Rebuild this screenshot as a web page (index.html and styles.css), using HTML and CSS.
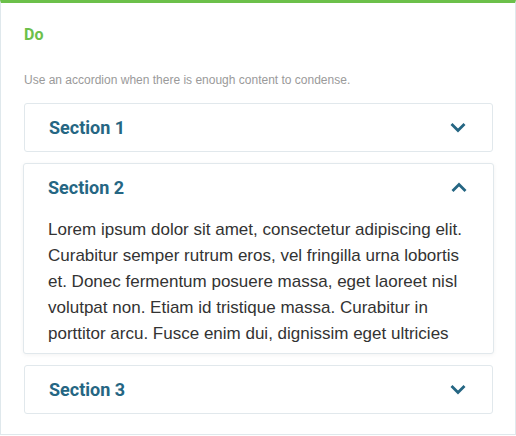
FILE: index.html
```html
<!DOCTYPE html>
<html lang="en">
<head>
    <meta charset="UTF-8">
    <title>Accordion - Do</title>
    <link rel="stylesheet" href="styles.css">
</head>
<body>
    <div class="card">
        <h4 class="card-title">Do</h4>
        <p class="card-note">Use an accordion when there is enough content to condense.</p>

        <div class="accordion">
            <div class="acc-item">
                <div class="acc-head">
                    <span>Section 1</span>
                    <svg class="chev" width="16" height="11" viewBox="0 0 16 11"><path d="M1.5 2 L8 8.5 L14.5 2" fill="none" stroke="currentColor" stroke-width="2.8"/></svg>
                </div>
            </div>

            <div class="acc-item open">
                <div class="acc-head">
                    <span>Section 2</span>
                    <svg class="chev" width="16" height="11" viewBox="0 0 16 11"><path d="M1.5 9 L8 2.5 L14.5 9" fill="none" stroke="currentColor" stroke-width="2.8"/></svg>
                </div>
                <div class="acc-body">
                    Lorem ipsum dolor sit amet, consectetur adipiscing elit. Curabitur semper rutrum eros, vel fringilla urna lobortis et. Donec fermentum posuere massa, eget laoreet nisl volutpat non. Etiam id tristique massa. Curabitur in porttitor arcu. Fusce enim dui, dignissim eget ultricies
                </div>
            </div>

            <div class="acc-item">
                <div class="acc-head">
                    <span>Section 3</span>
                    <svg class="chev" width="16" height="11" viewBox="0 0 16 11"><path d="M1.5 2 L8 8.5 L14.5 2" fill="none" stroke="currentColor" stroke-width="2.8"/></svg>
                </div>
            </div>
        </div>
    </div>
</body>
</html>
```

FILE: styles.css
```css
body {
    margin: 0;
    padding: 0;
    background: #fff;
    font-family: "Liberation Sans", Arial, sans-serif;
}
.card {
    width: 516px;
    height: 435px;
    border: 1px solid #dfe8ec;
    border-top: 3px solid #6cc04a;
    padding: 0 22px 0 23px;
    box-sizing: border-box;
}
.card-title {
    margin: 0;
    padding-top: 23px;
    font-family: "Roboto", sans-serif;
    font-weight: 700;
    font-size: 16px;
    line-height: 18px;
    color: #6cc04a;
}
.card-note {
    margin: 29px 0 0;
    font-size: 12px;
    line-height: 14px;
    color: #9a9a9a;
}
.accordion {
    margin-top: 16px;
    display: flex;
    flex-direction: column;
    gap: 11px;
}
.acc-item {
    border: 1px solid #e1e8ec;
    border-radius: 3px;
    background: #fff;
}
.acc-item.open {
    margin: 0 -1px;
    box-shadow: 0 1px 4px rgba(0, 0, 0, 0.05);
}
.acc-head {
    height: 47px;
    display: flex;
    align-items: center;
    justify-content: space-between;
    padding: 0 26px 0 24px;
    font-family: "Roboto", sans-serif;
    font-weight: 700;
    font-size: 18px;
    color: #256683;
}
.chev {
    display: block;
    color: #256683;
}
.acc-body {
    padding: 6px 24px 6px;
    font-size: 17px;
    line-height: 26px;
    color: #333;
}
```
